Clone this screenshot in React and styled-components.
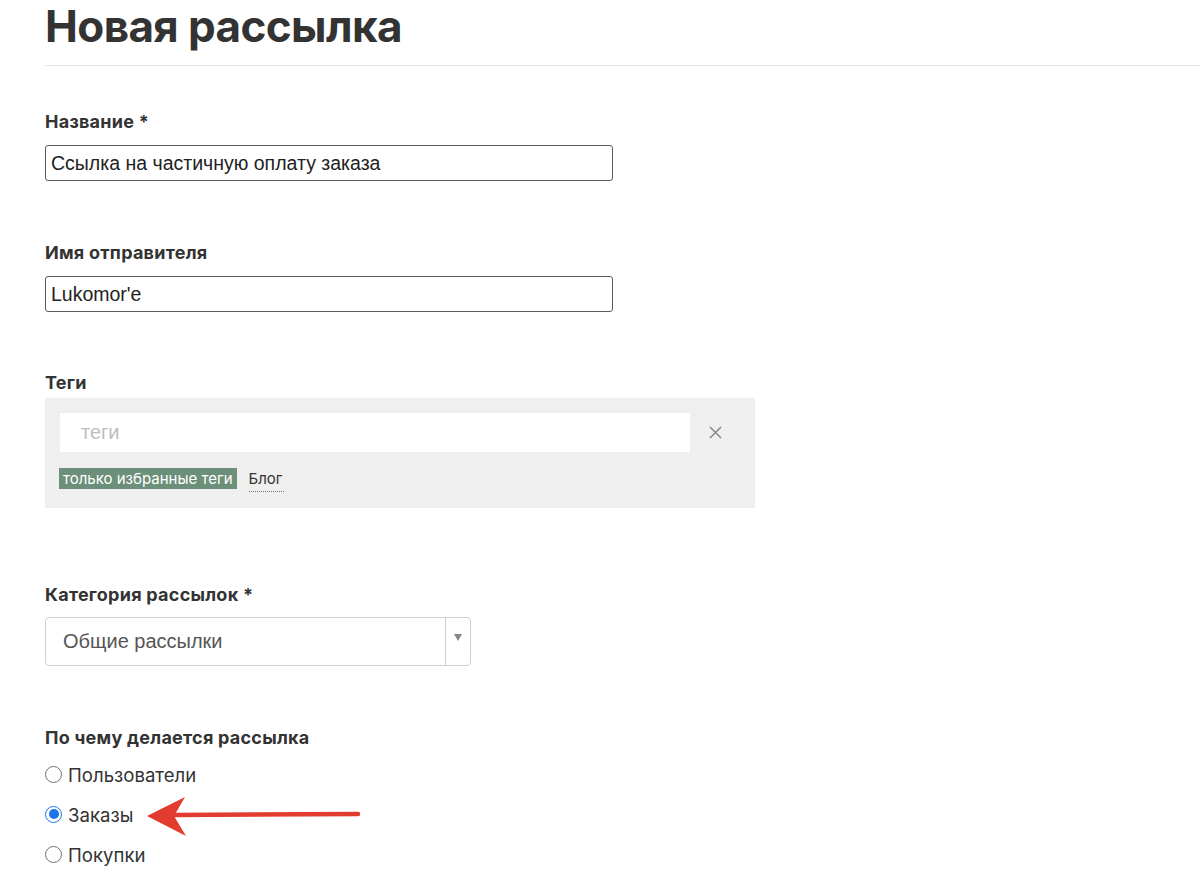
import React from 'react';
import styled, { createGlobalStyle } from 'styled-components';

const GlobalStyle = createGlobalStyle`
  body {
    margin: 0;
    background: #ffffff;
    font-family: "Inter", "Noto Sans", sans-serif;
    color: #333;
  }
`;

const Page = styled.div`
  padding: 0 0 40px 45px;
  width: 1155px;
`;

const Title = styled.h1`
  margin: 0;
  font-family: "Inter", sans-serif;
  font-weight: 700;
  font-size: 44px;
  line-height: 52px;
  letter-spacing: -0.6px;
  color: #333;
`;

const Rule = styled.div`
  height: 1px;
  background: #e6e6e6;
  margin-top: 13px;
`;

const Field = styled.div`
  margin-top: ${(p) => p.$top}px;
  position: relative;
`;

const Label = styled.div`
  font-family: "Inter", sans-serif;
  font-weight: 700;
  font-size: 18px;
  line-height: 20px;
  letter-spacing: 0.25px;
  color: #333;
  margin-bottom: ${(p) => p.$gap}px;
`;

const TextInput = styled.div`
  box-sizing: border-box;
  width: 568px;
  height: 36px;
  border: 1px solid #5a5a5a;
  border-radius: 3px;
  padding: 0 5px;
  display: flex;
  align-items: center;
  font-family: "Liberation Sans", Arial, sans-serif;
  font-size: 19.5px;
  color: #222;
`;

const TagBox = styled.div`
  box-sizing: border-box;
  width: 710px;
  height: 110px;
  background: #efefef;
  padding: 15px 0 0 15px;
`;

const TagSearchRow = styled.div`
  display: flex;
  align-items: center;
  gap: 10px;
`;

const TagSearch = styled.div`
  box-sizing: border-box;
  width: 630px;
  height: 39px;
  background: #fff;
  padding-left: 21px;
  display: flex;
  align-items: center;
  font-family: "Liberation Sans", Arial, sans-serif;
  font-size: 20px;
  color: #bdbdbd;
`;

const ClearButton = styled.span`
  display: flex;
  width: 30px;
  justify-content: center;
  color: #888;
`;

const TagList = styled.div`
  display: flex;
  align-items: center;
  gap: 12px;
  margin-top: 12px;
  margin-left: -1px;
`;

const Tag = styled.span`
  background: ${(p) => (p.$active ? '#6b8f78' : 'transparent')};
  color: ${(p) => (p.$active ? '#fff' : '#333')};
  font-family: "Inter", sans-serif;
  font-size: 15px;
  line-height: 21px;
  padding: ${(p) => (p.$active ? '0 4px' : '0 2px 2px 0')};
  margin-top: ${(p) => (p.$active ? 0 : 4)}px;
  border-bottom: ${(p) => (p.$active ? 'none' : '1px dotted #777')};
`;

const Select = styled.div`
  box-sizing: border-box;
  width: 426px;
  height: 49px;
  border: 1px solid #cfcfcf;
  border-radius: 4px;
  display: flex;
  align-items: stretch;
`;

const SelectValue = styled.div`
  flex: 1;
  display: flex;
  align-items: center;
  padding-left: 17px;
  font-family: "Liberation Sans", Arial, sans-serif;
  font-size: 20px;
  color: #555;
`;

const SelectArrow = styled.div`
  width: 25px;
  border-left: 1px solid #cfcfcf;
  display: flex;
  justify-content: center;
  padding-top: 16px;
  box-sizing: border-box;
`;

const Triangle = styled.span`
  width: 0;
  height: 0;
  border-left: 4px solid transparent;
  border-right: 4px solid transparent;
  border-top: 7px solid #888;
`;

const RadioGroup = styled.div`
  display: flex;
  flex-direction: column;
  gap: 14px;
  margin-top: 14px;
`;

const RadioRow = styled.label`
  display: flex;
  align-items: center;
  gap: 6px;
  height: 26px;
  position: relative;
  font-family: "Inter", sans-serif;
  font-size: 18.6px;
  color: #333;
`;

const RadioDot = styled.span`
  box-sizing: border-box;
  width: 17px;
  height: 17px;
  border-radius: 50%;
  border: ${(p) => (p.$checked ? '1.5px solid #1a73e8' : '1.5px solid #6f6f6f')};
  background: #fff;
  display: flex;
  align-items: center;
  justify-content: center;
  margin-top: -2px;
  &::after {
    content: '';
    width: 10px;
    height: 10px;
    border-radius: 50%;
    background: ${(p) => (p.$checked ? '#1a73e8' : 'transparent')};
  }
`;

const Pointer = styled.svg`
  position: absolute;
  left: 95px;
  top: -10px;
`;

const RedArrow = () => (
  <Pointer width="230" height="48" viewBox="0 0 230 48">
    <line x1="34" y1="23" x2="218" y2="22" stroke="#e23b2f" strokeWidth="4.5" strokeLinecap="round" />
    <polygon points="7,24 45,5 34,24 46,44" fill="#e23b2f" />
  </Pointer>
);

const radios = [
  { label: 'Пользователи' },
  { label: 'Заказы', checked: true, arrow: true },
  { label: 'Покупки' },
];

export default function App() {
  return (
    <>
      <GlobalStyle />
      <Page>
        <Title>Новая рассылка</Title>
        <Rule />

        <Field $top={46}>
          <Label $gap={13}>Название *</Label>
          <TextInput>Ссылка на частичную оплату заказа</TextInput>
        </Field>

        <Field $top={62}>
          <Label $gap={13}>Имя отправителя</Label>
          <TextInput>Lukomor'e</TextInput>
        </Field>

        <Field $top={61}>
          <Label $gap={5}>Теги</Label>
          <TagBox>
            <TagSearchRow>
              <TagSearch>теги</TagSearch>
              <ClearButton>
                <svg width="13" height="13" viewBox="0 0 13 13">
                  <path d="M1 1L12 12M12 1L1 12" stroke="#8a8a8a" strokeWidth="1.6" />
                </svg>
              </ClearButton>
            </TagSearchRow>
            <TagList>
              <Tag $active>только избранные теги</Tag>
              <Tag>Блог</Tag>
            </TagList>
          </TagBox>
        </Field>

        <Field $top={77}>
          <Label $gap={12}>Категория рассылок *</Label>
          <Select>
            <SelectValue>Общие рассылки</SelectValue>
            <SelectArrow>
              <Triangle />
            </SelectArrow>
          </Select>
        </Field>

        <Field $top={62}>
          <Label $gap={0}>По чему делается рассылка</Label>
          <RadioGroup>
            {radios.map((r) => (
              <RadioRow key={r.label}>
                <RadioDot $checked={r.checked} />
                {r.label}
                {r.arrow && <RedArrow />}
              </RadioRow>
            ))}
          </RadioGroup>
        </Field>
      </Page>
    </>
  );
}
